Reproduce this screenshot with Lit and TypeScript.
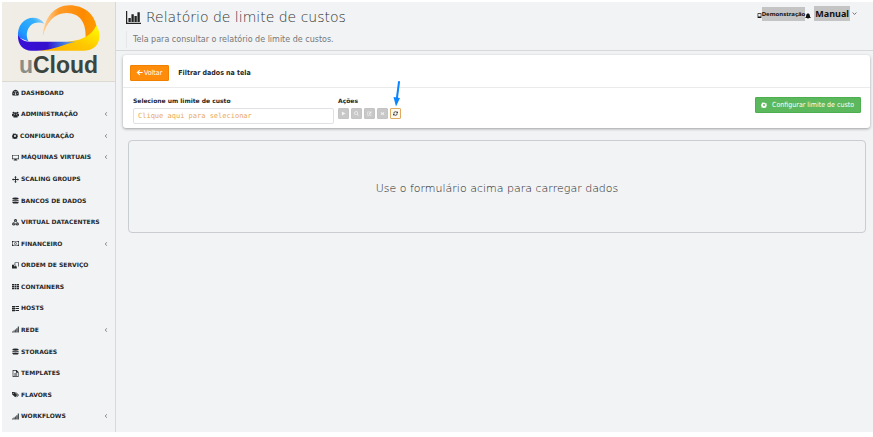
import { LitElement, html, css, svg, nothing, SVGTemplateResult } from "lit";
import { customElement, property } from "lit/decorators.js";

const icons: Record<string, SVGTemplateResult> = {
  dashboard: svg`<path d="M1 14a7.500 9 0 1 1 14 0l-1 1H2z"/><g fill="#f1f3f5"><circle cx="4" cy="10" r="1.1"/><circle cx="5.300" cy="6.500" r="1.100"/><circle cx="11" cy="6.500" r="1.100"/><circle cx="12.200" cy="10" r="1.100"/><path d="M7.500 5h1.200v5a1.800 1.800 0 1 1-1.200 0z"/></g>`,
  users: svg`<circle cx="3.500" cy="4" r="2.300"/><circle cx="12.500" cy="4" r="2.300"/><circle cx="8" cy="6" r="3"/><path d="M0 11V8q0-2 2-2h2q0 3 2 3-3 0-3 3H1zM16 11V8q0-2-2-2h-2q0 3-2 3 3 0 3 3h2zM3 13q0-4 3-4h4q3 0 3 4 0 2-2 2H5q-2 0-2-2z"/>`,
  gear: svg`<path fill-rule="evenodd" d="M6.500 1h3l.5 2 1.500.7L13.300 2.600l1.800 2-1 1.800.4 1.100H16v2l-1.700.6-.5 1.500 1 1.800-2 2-1.800-1-1.500.6-.5 2h-2.500l-.6-2-1.400-.6-1.900 1-2-2 1-1.800L1 10 0 9.500v-3L2 6l.5-1.400-.9-1.800 2-1.500 1.500 1L6 3zM8 5.300a2.700 2.700 0 1 0 0 5.400 2.700 2.700 0 0 0 0-5.400z"/>`,
  monitor: svg`<path fill-rule="evenodd" d="M0 2h16v10h-5.500v1.500H12V15H4v-1.500h1.500V12H0zm1.500 1.500v6.500h13V3.500z"/>`,
  move: svg`<path d="M8 0l3 3.200H9V7h3.800V5L16 8l-3.200 3V9H9v3.800h2L8 16l-3-3.200h2V9H3.200v2L0 8l3.200-3v2H7V3.200H5z"/>`,
  database: svg`<path d="M1 3q0-2 7-2t7 2v1.500q-2 1.500-7 1.500T1 4.500zM1 6q2 1.500 7 1.500T15 6v2.500Q13 10 8 10T1 8.500zM1 10q2 1.500 7 1.500t7-1.500v3q0 2-7 2t-7-2z"/>`,
  cubes: svg`<path d="M8 0l3.500 1.500v4L8 7 4.500 5.500v-4zM4 7.500l3.500 1.500v4.500L4 15 .5 13.500V9zM12 7.500L15.500 9v4.500L12 15l-3.500-1.500V9z"/><path d="M5.200 2.200L8 3.400l2.800-1.200M8 3.400v3M1.200 9.700L4 11l2.800-1.300M4 11v3M9.200 9.700L12 11l2.800-1.300M12 11v3" fill="none" stroke="#f1f3f5" stroke-width=".8"/>`,
  money: svg`<path fill-rule="evenodd" d="M0 2.500h16v11H0zm1.200 3v5q2 0 2 1.800h9.600q0-1.800 2-1.800v-5q-2 0-2-1.800H3.200q0 1.800-2 1.800zM8 4.500q2.500 0 2.500 3.500T8 11.500 5.500 8 8 4.500zM7 6v4h2V6z"/>`,
  clone: svg`<path fill-rule="evenodd" d="M6 1h10v9h-5v5H0V6h6zm1.500 1.500V8H9.500V10h5V2.500zM4.500 7.500v2h3v-2z"/>`,
  grid: svg`<path d="M0 2h4.600v3.300H0zM5.700 2h4.600v3.300H5.700zM11.400 2H16v3.300h-4.600zM0 6.400h4.600v3.300H0zM5.700 6.400h4.600v3.300H5.700zM11.400 6.400H16v3.300h-4.600zM0 10.800h4.600V14H0zM5.700 10.800h4.600V14H5.700zM11.400 10.800H16V14h-4.600z"/>`,
  server: svg`<path d="M0 2h7v3H0zM8 2.500h8v2H8zM0 6.500h7v3H0zM8 7h8v2H8zM0 11h7v3H0zM8 11.500h8v2H8z"/>`,
  signal: svg`<g opacity=".8"><path d="M0 12.500h2.800V15H0zM3.200 10.500H6V15H3.200zM6.500 8h2.800v7H6.500zM9.800 5h2.800v10H9.800zM13.100 1H16v14h-2.900z"/></g>`,
  file: svg`<path fill-rule="evenodd" d="M1.500 0h9L15 4.500V16H1.500zM3 1.500v13h10.500V6H9V1.500zM5 8h6.500v1.200H5zM5 10h6.500v1.200H5zM5 12h6.500v1.200H5z"/>`,
  tags: svg`<path fill-rule="evenodd" d="M0 2.500h5.500L12 9l-4.500 5L0 7.500zM2.600 4a1.200 1.200 0 1 0 0 2.400 1.200 1.200 0 0 0 0-2.400z"/><path d="M7 2.500h1.500L16 9l-5 5.500-1.200-1L13.500 9z"/>`,
  chart: svg`<path d="M0 1h1.300v12.500H16v1.500H0z"/><path d="M2.600 8.500h2.500v4.200H2.600zM5.800 4.500h2.500v8.200H5.800zM9 6.500h2.500v6.200H9zM12.200 2.500h2.500v10.200h-2.500z"/>`,
  back: svg`<path d="M8 1.500l1.800 1.700L6.300 6.600H15v2.800H6.300l3.500 3.400L8 14.500 1.200 8z"/>`,
  play: svg`<path d="M3 1.500L14 8 3 14.500z"/>`,
  search: svg`<path fill-rule="evenodd" d="M7 1a6 6 0 0 1 4.900 9.400l3.300 3.300-1.500 1.500-3.300-3.300A6 6 0 1 1 7 1zm0 2a4 4 0 1 0 0 8 4 4 0 0 0 0-8z"/>`,
  edit: svg`<path d="M10 2.800H1.800v11.400h11V9" fill="none" stroke="currentColor" stroke-width="1.700"/><path d="M13 1l2.300 2.300L8.500 10.200 5.500 11l.7-3.100z"/>`,
  close: svg`<path d="M3.500 3l4.500 3 4.500-3 1 1.500L11 8l2.500 3.500-1 1.500L8 10l-4.500 3-1-1.500L5 8 2.500 4.500z"/>`,
  refresh: svg`<path d="M2.300 7Q3 2.300 8 2.300q3 0 4.800 2.200M13.700 9Q13 13.700 8 13.700q-3 0-4.800-2.200" fill="none" stroke="currentColor" stroke-width="2.400"/><path d="M15.500 1v6h-6zM.5 15V9h6z"/>`,
  bell: svg`<path d="M8 0q1 0 1 1.300Q13 2.500 13 7q0 3.500 2.500 5.500v1H.5v-1Q3 10.500 3 7q0-4.500 4-5.700Q7 0 8 0zM6 14.300h4Q9.500 16 8 16t-2-1.700z"/>`,
  building: svg`<path fill-rule="evenodd" d="M2 1h12v15H2zm2 2v8h8V3z"/>`,
  down: svg`<path d="M2 5l6 6 6-6" fill="none" stroke="currentColor" stroke-width="1.800"/>`,
  left: svg`<path d="M11 1L5 8l6 7" fill="none" stroke="currentColor" stroke-width="3"/>`,
};

const icon = (name: string, cls = "") =>
  html`<svg class="icon ${cls}" viewBox="0 0 16 16" fill="currentColor" aria-hidden="true">${icons[name]}</svg>`;

const iconStyles = css`
  .icon {
    width: 7px;
    height: 7px;
    flex: none;
    display: block;
  }
`;

interface MenuItem {
  label: string;
  icon: string;
  children?: boolean;
}

const menu: MenuItem[] = [
  { label: "DASHBOARD", icon: "dashboard" },
  { label: "ADMINISTRAÇÃO", icon: "users", children: true },
  { label: "CONFIGURAÇÃO", icon: "gear", children: true },
  { label: "MÁQUINAS VIRTUAIS", icon: "monitor", children: true },
  { label: "SCALING GROUPS", icon: "move" },
  { label: "BANCOS DE DADOS", icon: "database" },
  { label: "VIRTUAL DATACENTERS", icon: "cubes" },
  { label: "FINANCEIRO", icon: "money", children: true },
  { label: "ORDEM DE SERVIÇO", icon: "clone" },
  { label: "CONTAINERS", icon: "grid" },
  { label: "HOSTS", icon: "server" },
  { label: "REDE", icon: "signal", children: true },
  { label: "STORAGES", icon: "database" },
  { label: "TEMPLATES", icon: "file" },
  { label: "FLAVORS", icon: "tags" },
  { label: "WORKFLOWS", icon: "signal", children: true },
];

@customElement("side-menu")
class SideMenu extends LitElement {
  @property({ attribute: false }) items: MenuItem[] = [];

  static styles = [
    iconStyles,
    css`
      :host {
        display: flex;
        flex-direction: column;
        box-sizing: border-box;
        border-right: 1px solid #d6d8da;
        padding-bottom: 5px;
      }
      .logo {
        display: flex;
        flex-direction: column;
        align-items: center;
        box-sizing: border-box;
        height: 80px;
        padding-top: 2px;
        background: #f0ede6;
        border-bottom: 1px solid #dcd9d0;
        text-decoration: none;
      }
      .cloud {
        width: 84px;
        height: 48px;
        flex: none;
      }
      .brand {
        font: bold 23px/26px "Liberation Sans", Arial, sans-serif;
        color: #3b4540;
      }
      .u {
        color: #8b8d89;
      }
      nav {
        flex: 1;
        display: grid;
      }
      ul {
        list-style: none;
        margin: 0;
        padding: 0;
        display: grid;
        grid-auto-rows: 1fr;
      }
      li {
        display: grid;
      }
      .item {
        display: flex;
        align-items: center;
        gap: 2px;
        padding: 0 7px 0 10px;
        color: #25282b;
        font-weight: bold;
        text-decoration: none;
        white-space: nowrap;
      }
      .gear {
        width: 6px;
        height: 6px;
      }
      .chevron {
        width: 4px;
        height: 4px;
        margin-left: auto;
        color: #666;
      }
    `,
  ];

  render() {
    return html`
      <a class="logo" href="#">
        <svg class="cloud" viewBox="48 12 256 144" aria-hidden="true">
          <defs>
            <linearGradient id="sky" x1="0" y1="1" x2="1" y2="0">
              <stop offset="0" stop-color="#2a63ff" />
              <stop offset=".3" stop-color="#1e9cff" />
              <stop offset=".75" stop-color="#35b0fb" />
              <stop offset="1" stop-color="#bfe0f5" />
            </linearGradient>
            <linearGradient id="sun" x1="0" y1=".6" x2="1" y2=".7">
              <stop offset="0" stop-color="#ffd2a0" />
              <stop offset=".25" stop-color="#ff9a28" />
              <stop offset=".7" stop-color="#ff8a00" />
              <stop offset="1" stop-color="#ff9d00" />
            </linearGradient>
            <linearGradient id="gold" x1="0" y1="1" x2="1" y2="0">
              <stop offset="0" stop-color="#ffb000" />
              <stop offset=".5" stop-color="#ffc800" />
              <stop offset="1" stop-color="#ffff00" />
            </linearGradient>
            <linearGradient id="deep" x1="0" y1="0" x2="1" y2="0">
              <stop offset="0" stop-color="#3a10d8" />
              <stop offset=".5" stop-color="#3410cc" />
              <stop offset=".75" stop-color="#3b6fe0" />
              <stop offset="1" stop-color="#8fb4d0" />
            </linearGradient>
          </defs>
          <path fill="url(#sky)" d="M51 112C48 78 68 53 98 53c14 0 25 6 33 18-14-6-36-5-46 11-8 12-10 27-2 43z" />
          <path fill="url(#sun)" d="M127 108C130 52 163 15 208 15c44 0 75 27 82 62-7 14-17 30-33 40 3-45-14-79-58-79-38 0-62 30-72 70z" />
          <path fill="url(#gold)" d="M290 76c17 24 14 76-37 77H110c40-3 74-27 110-30 24-3 58-18 70-47z" />
          <path fill="url(#deep)" d="M51 106c8 14 20 20 42 20h136c-40 6-68 27-120 27H92c-26 0-42-18-41-47z" />
        </svg>
        <span class="brand"><span class="u">u</span>Cloud</span>
      </a>
      <nav>
        <ul>
          ${this.items.map(
            (item) => html`<li>
              <a class="item" href="#">
                ${icon(item.icon, item.icon)}<span>${item.label}</span>${item.children ? icon("left", "chevron") : nothing}
              </a>
            </li>`,
          )}
        </ul>
      </nav>
    `;
  }
}

@customElement("app-root")
class AppRoot extends LitElement {
  static styles = [
    iconStyles,
    css`
      :host {
        display: grid;
        grid-template-columns: 114px minmax(0, 1fr);
        box-sizing: border-box;
        min-height: 100vh;
        padding: 2px 0 5px 2px;
        background: linear-gradient(#f1f3f5, #f1f3f5) content-box, #fff;
        font: 6px/8px "DejaVu Sans", Verdana, sans-serif;
        color: #25282b;
      }
      button,
      input {
        font: inherit;
        margin: 0;
        box-sizing: border-box;
      }
      .top {
        display: flex;
        justify-content: space-between;
        align-items: flex-start;
        box-sizing: border-box;
        height: 49px;
        padding: 4px 16px 0 10px;
        border-bottom: 1px solid #d6d8da;
      }
      .title {
        display: flex;
        align-items: center;
        gap: 5px;
        margin: 0;
        font-size: 14px;
        line-height: 23px;
        font-weight: 200;
        color: #333;
      }
      .chart {
        width: 15px;
        height: 15px;
        color: #222;
      }
      .subtitle {
        margin: 2px 0 0;
        padding-left: 6px;
        border-left: 1px solid #e4e6e8;
        font-size: 8px;
        line-height: 17px;
        color: #777;
      }
      .user {
        display: flex;
        align-items: center;
        font-family: "Noto Sans", sans-serif;
        font-weight: bold;
        color: #111;
      }
      .tenant {
        background: #c4c4c4;
        line-height: 14px;
      }
      .account {
        display: flex;
        align-items: center;
        gap: 2px;
        padding: 0;
        margin-left: 3px;
        border: 0;
        background: none;
        color: #111;
      }
      .name {
        padding: 0 1px;
        background: #c4c4c4;
        font-size: 9px;
        line-height: 15px;
      }
      .small {
        width: 5px;
        height: 5px;
      }
      .bell {
        width: 6px;
        height: 6px;
      }
      .low {
        margin-top: 4px;
      }
      .card {
        margin: 4px 3px 0 7px;
        border-radius: 3px;
        background: #fff;
        box-shadow: 0 1px 3px rgba(0, 0, 0, 0.35);
      }
      .head {
        display: flex;
        align-items: center;
        gap: 9px;
        box-sizing: border-box;
        height: 33px;
        padding: 3px 7px 0;
        border-bottom: 1px solid #e8eaec;
      }
      .head h2 {
        margin: 0;
        font: bold 7px/10px "DejaVu Sans Condensed", "DejaVu Sans", sans-serif;
      }
      .back,
      .setup {
        display: flex;
        align-items: center;
        height: 16px;
        border: 1px solid #f08200;
        border-radius: 1px;
        background: #ff8c0a;
        color: #fff;
        font: 7px/10px "DejaVu Sans Condensed", "DejaVu Sans", sans-serif;
      }
      .back {
        gap: 1px;
        padding: 0 6px 0 5px;
      }
      .setup {
        gap: 5px;
        margin-left: auto;
        padding: 0 6px 0 5px;
        border-color: #4cae4c;
        background: #5cb85c;
      }
      .setup .icon {
        width: 6px;
        height: 6px;
      }
      .form {
        display: flex;
        align-items: flex-start;
        gap: 4px;
        padding: 9px 9px 4px 10px;
      }
      .field {
        display: flex;
        flex-direction: column;
        gap: 3px;
        font-weight: bold;
      }
      .select {
        width: 201px;
        height: 16px;
        padding: 0 4px;
        border: 1px solid #dfe1e4;
        border-radius: 2px;
        background: #fff;
        font: 7px/12px "DejaVu Sans Mono", monospace;
      }
      .select::placeholder {
        color: #eaa95a;
        opacity: 1;
      }
      .actions {
        display: flex;
        gap: 2px;
        position: relative;
      }
      .action {
        display: grid;
        place-items: center;
        width: 11px;
        height: 11px;
        padding: 0;
        border: 1px solid #c4c4c4;
        border-radius: 1px;
        background: #c8c8c8;
        color: #f4f4f4;
      }
      .action.active {
        border-color: #e0aa60;
        background: #fff8ee;
        color: #222;
      }
      .action .icon {
        width: 5px;
        height: 5px;
      }
      .pointer {
        position: absolute;
        right: 0;
        bottom: 12px;
        width: 8px;
        height: 26px;
      }
      .empty {
        display: grid;
        place-items: center;
        box-sizing: border-box;
        min-height: 93px;
        margin: 12px 7px 0 12px;
        padding: 10px;
        border: 1px solid #c9ccd0;
        border-radius: 4px;
        font-size: 11px;
        line-height: 16px;
        font-weight: 200;
        color: #222;
      }
      .empty p {
        margin: 0;
        padding-top: 4px;
      }
    `,
  ];

  render() {
    const actions = [
      { name: "play", label: "Executar" },
      { name: "search", label: "Visualizar" },
      { name: "edit", label: "Editar" },
      { name: "close", label: "Remover" },
    ];
    return html`
      <side-menu .items=${menu}></side-menu>
      <main>
        <header class="top">
          <div>
            <h1 class="title">${icon("chart", "chart")}Relatório de limite de custos</h1>
            <p class="subtitle">Tela para consultar o relatório de limite de custos.</p>
          </div>
          <div class="user">
            ${icon("building", "small low")}
            <span class="tenant">Demonstração</span>
            ${icon("bell", "bell low")}
            <button class="account"><span class="name">Manual</span>${icon("down", "small")}</button>
          </div>
        </header>
        <section class="card">
          <div class="head">
            <button class="back">${icon("back")}Voltar</button>
            <h2>Filtrar dados na tela</h2>
          </div>
          <div class="form">
            <div class="field">
              <label for="limit">Selecione um limite de custo</label>
              <input class="select" id="limit" type="text" placeholder="Clique aqui para selecionar" />
            </div>
            <div class="field">
              <span>Ações</span>
              <div class="actions">
                ${actions.map(
                  (a) => html`<button class="action" disabled aria-label=${a.label}>${icon(a.name)}</button>`,
                )}
                <button class="action active" aria-label="Atualizar">${icon("refresh")}</button>
                <svg class="pointer" viewBox="0 0 8 26" aria-hidden="true">
                  <path d="M6 1L3.800 18" stroke="#0a84ff" stroke-width="2" stroke-linecap="round" />
                  <path d="M.5 16l6.500 1-4 8.500z" fill="#0a84ff" />
                </svg>
              </div>
            </div>
            <button class="setup">${icon("gear")}Configurar limite de custo</button>
          </div>
        </section>
        <section class="empty"><p>Use o formulário acima para carregar dados</p></section>
      </main>
    `;
  }
}
